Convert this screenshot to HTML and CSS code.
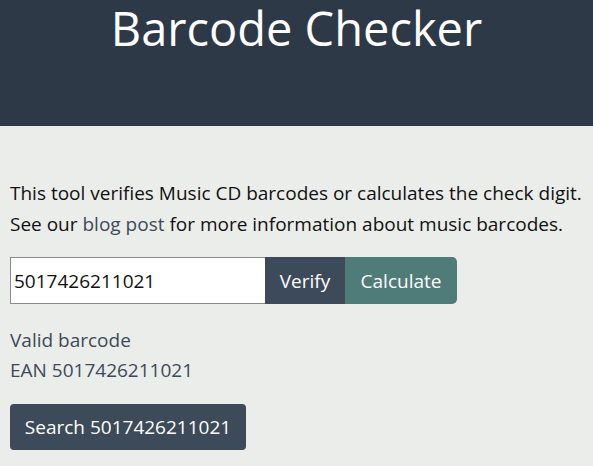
FILE: index.html
```html
<!DOCTYPE html>
<html lang="en">
<head>
<meta charset="utf-8">
<title>Barcode Checker</title>
<link rel="stylesheet" href="styles.css">
</head>
<body>
<header class="site-header">
  <h1 class="title">Barcode Checker</h1>
</header>
<main class="content">
  <p class="intro">This tool verifies Music CD barcodes or calculates the check digit.<br>See our <a href="#" class="link">blog post</a> for more information about music barcodes.</p>
  <form class="check-form">
    <input class="code-input" type="text" value="5017426211021">
    <button type="button" class="btn btn-verify">Verify</button>
    <button type="button" class="btn btn-calc">Calculate</button>
  </form>
  <div class="result">
    <div>Valid barcode</div>
    <div>EAN 5017426211021</div>
  </div>
  <button type="button" class="search-btn">Search 5017426211021</button>
</main>
</body>
</html>
```
FILE: styles.css
```css
html, body {
  margin: 0;
  padding: 0;
}
body {
  background: #ebedea;
  font-family: "Open Sans", "Noto Sans", sans-serif;
  font-size: 19px;
  color: #111;
  height: 466px;
  overflow: hidden;
}
.site-header {
  background: #2e3947;
  height: 126px;
  display: flex;
  justify-content: center;
  align-items: flex-start;
}
.title {
  margin: 0;
  color: #fff;
  font-weight: 400;
  font-size: 47px;
  line-height: 56px;
}
.content {
  padding: 52px 10px 0 10px;
}
.intro {
  margin: 0;
  line-height: 31px;
}
.link {
  color: #3d4a59;
  text-decoration: none;
}
.check-form {
  display: flex;
  margin-top: 17px;
}
.code-input {
  box-sizing: border-box;
  width: 255px;
  height: 47px;
  border: 1px solid #8a8a8a;
  border-right: none;
  padding: 0 3px;
  font-family: inherit;
  font-size: 19px;
  color: #111;
  background: #fff;
  outline: none;
}
.btn {
  border: none;
  height: 47px;
  font-family: inherit;
  font-size: 19px;
  color: #fff;
  padding: 0;
}
.btn-verify {
  background: #3d4a59;
  width: 80px;
}
.btn-calc {
  background: #4f7b78;
  width: 112px;
  border-radius: 0 5px 5px 0;
}
.result {
  color: #3d4a59;
  line-height: 30px;
  margin-top: 21px;
}
.search-btn {
  margin-top: 19px;
  background: #3d4a59;
  color: #fff;
  border: none;
  border-radius: 4px;
  height: 46px;
  width: 236px;
  font-family: inherit;
  font-size: 19px;
  padding: 0;
}
```
